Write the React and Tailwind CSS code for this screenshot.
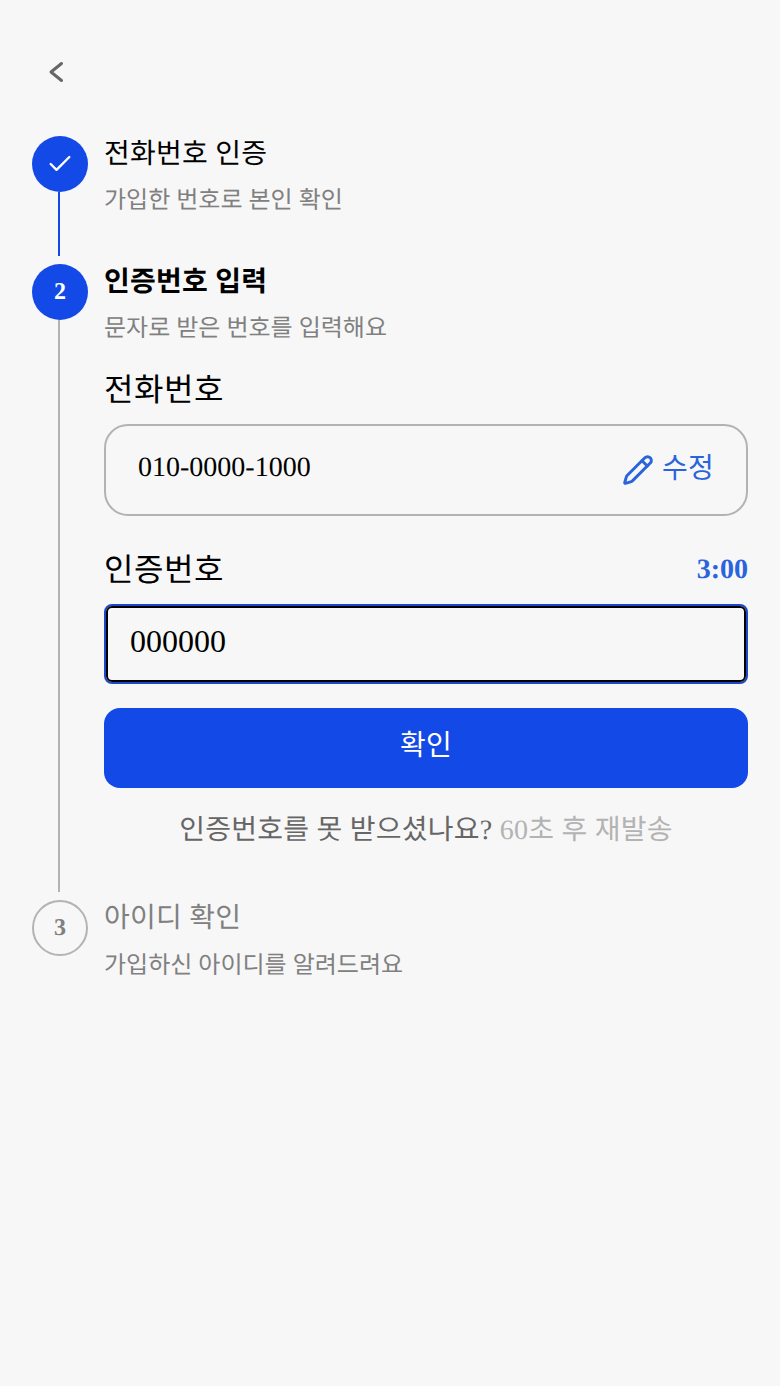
import React from "react";

const font = "font-['Liberation_Serif','Noto_Sans_CJK_KR',serif] [text-rendering:geometricPrecision]";

function Pencil() {
  return (
    <svg width="32" height="32" viewBox="0 0 24 24" fill="none" stroke="currentColor" strokeWidth="2.2" strokeLinecap="round" strokeLinejoin="round">
      <path d="M21.174 6.812a1 1 0 0 0-3.986-3.987L3.842 16.174a2 2 0 0 0-.5.83l-1.321 4.352a.5.5 0 0 0 .623.622l4.353-1.32a2 2 0 0 0 .83-.497z" />
      <path d="m15 5 4 4" />
    </svg>
  );
}

export default function App() {
  return (
    <div lang="ko" className={`${font} min-h-[1386px] w-full bg-[#f7f7f7] px-8 pt-[48px]`}>
      <button className="flex h-12 w-12 items-center justify-start text-[#666666]">
        <svg width="48" height="48" viewBox="0 0 48 48" fill="none" stroke="currentColor" strokeWidth="3" strokeLinecap="round" strokeLinejoin="round">
          <path d="M29.5 15.5 L19 24 L29.5 32.5" />
        </svg>
      </button>

      <div className="mt-[40px] flex flex-col gap-2">
        {/* step 1 */}
        <div className="flex gap-4">
          <div className="flex w-14 flex-col">
            <div className="flex h-14 w-14 items-center justify-center rounded-full bg-[#1349e6] text-white">
              <svg width="28" height="28" viewBox="0 0 24 24" fill="none" stroke="currentColor" strokeWidth="2" strokeLinecap="round" strokeLinejoin="round">
                <path d="M20 6 9 17l-5-5" />
              </svg>
            </div>
            <div className="ml-[26px] h-16 w-[2px] bg-[#1349e6]" />
          </div>
          <div className="pt-[3px]">
            <div className="text-[28px] leading-[32px] tracking-[0.24px] text-black">전화번호 인증</div>
            <div className="mt-[14px] text-[24px] leading-[32px] text-[#808080]">가입한 번호로 본인 확인</div>
          </div>
        </div>

        {/* step 2 */}
        <div className="flex gap-4">
          <div className="flex w-14 flex-col">
            <div className="flex h-14 w-14 items-center justify-center rounded-full bg-[#1349e6] text-[24px] font-bold text-white">2</div>
            <div className="ml-[26px] w-[2px] flex-1 bg-[#b3b3b3]" />
          </div>
          <div className="min-w-0 flex-1 pt-[3px]">
            <div className="text-[28px] font-bold leading-[32px] tracking-[0.24px] text-black">인증번호 입력</div>
            <div className="mt-[14px] text-[24px] leading-[32px] text-[#808080]">문자로 받은 번호를 입력해요</div>

            <div className="mt-[23px] text-[32px] leading-[44px] tracking-[0.56px] text-black">전화번호</div>
            <div className="mt-[12px] flex h-[92px] items-center justify-between rounded-3xl border-2 border-[#b3b3b3] px-[32px]">
              <span className="pb-[4px] text-[28px] leading-[36px] text-black">010-0000-1000</span>
              <button className="flex items-center gap-[8px] text-[28px] leading-[36px] tracking-[0.24px] text-[#2a64dc]">
                <Pencil />
                <span className="pb-[2px]">수정</span>
              </button>
            </div>

            <div className="mt-[34px] flex items-center justify-between">
              <span className="text-[32px] leading-[40px] tracking-[0.56px] text-black">인증번호</span>
              <span className="text-[28px] font-bold leading-[40px] text-[#2a64dc]">3:00</span>
            </div>
            <input
              readOnly
              value="000000"
              className="mt-[14px] block h-20 w-full rounded-lg border-2 border-[#1c49c9] bg-transparent px-6 pb-[6px] text-[32px] text-black outline-2 -outline-offset-4 outline-black"
            />
            <button className="mt-6 h-20 w-full rounded-2xl bg-[#1349e6] pb-1 text-[28px] tracking-[0.24px] text-white">확인</button>
            <div className="mb-[41px] mt-[23px] text-center text-[28px] leading-[40px] tracking-[0.24px]">
              <span className="text-[#666666]">인증번호를 못 받으셨나요? </span>
              <span className="text-[#b3b3b3]">60초 후 재발송</span>
            </div>
          </div>
        </div>

        {/* step 3 */}
        <div className="flex gap-4">
          <div className="flex h-14 w-14 items-center justify-center rounded-full border-2 border-[#b3b3b3] text-[24px] font-bold text-[#808080]">3</div>
          <div className="pt-[3px]">
            <div className="text-[28px] leading-[32px] tracking-[0.24px] text-[#808080]">아이디 확인</div>
            <div className="mt-[15px] text-[24px] leading-[32px] text-[#808080]">가입하신 아이디를 알려드려요</div>
          </div>
        </div>
      </div>
    </div>
  );
}
